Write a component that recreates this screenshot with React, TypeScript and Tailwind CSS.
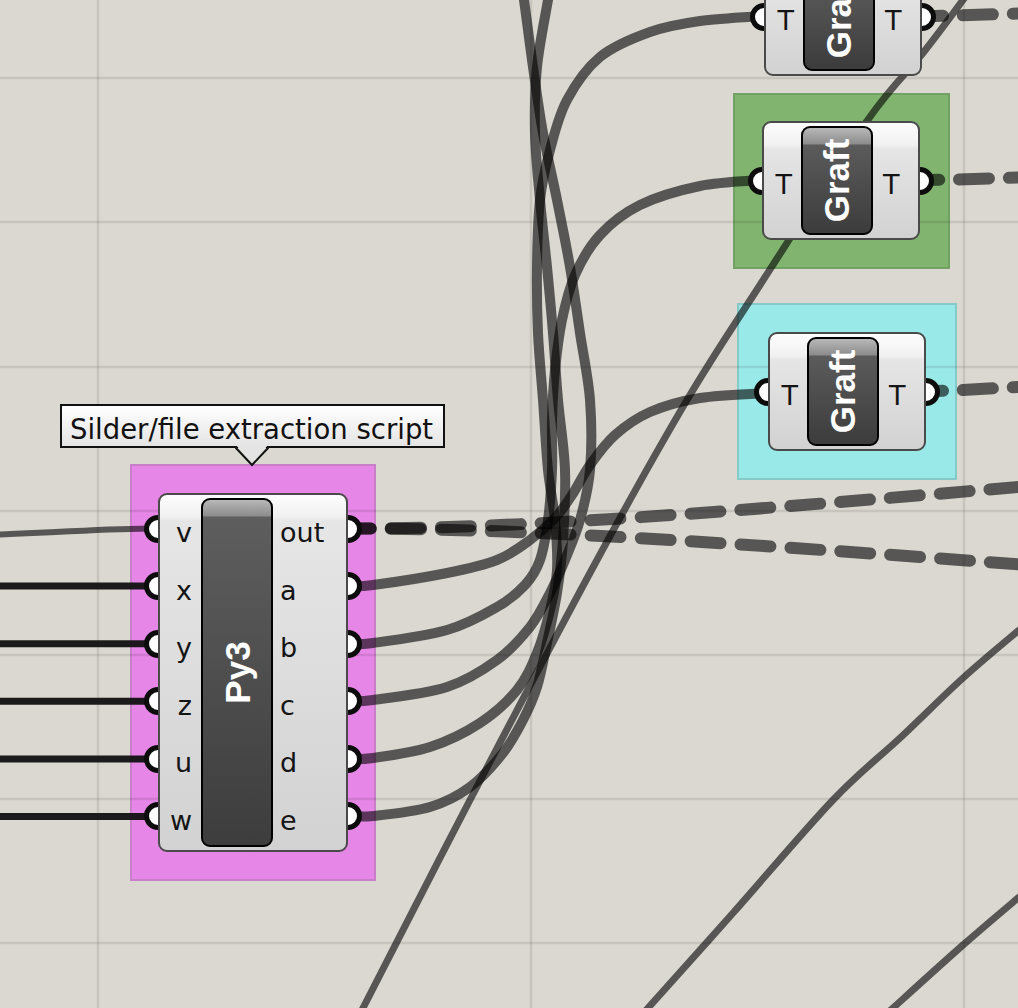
import React from "react";

type P = [number, number];

function smooth(pts: P[]): string {
  let d = `M ${pts[0][0]} ${pts[0][1]}`;
  for (let i = 0; i < pts.length - 1; i++) {
    const p0 = pts[i - 1] || pts[i];
    const p1 = pts[i];
    const p2 = pts[i + 1];
    const p3 = pts[i + 2] || p2;
    const c1x = p1[0] + (p2[0] - p0[0]) / 6;
    const c1y = p1[1] + (p2[1] - p0[1]) / 6;
    const c2x = p2[0] - (p3[0] - p1[0]) / 6;
    const c2y = p2[1] - (p3[1] - p1[1]) / 6;
    d += ` C ${c1x.toFixed(1)} ${c1y.toFixed(1)}, ${c2x.toFixed(1)} ${c2y.toFixed(1)}, ${p2[0]} ${p2[1]}`;
  }
  return d;
}

const rowY = [528.5, 586.1, 643.7, 701.3, 758.9, 816.5];

const wireA: P[] = [
  [347, 586], [373, 585], [447, 573], [497, 560], [530, 540], [555, 518], [572, 495],
  [590, 465], [615, 435], [650, 412], [700, 398], [768, 393],
];
const wireB: P[] = [
  [347, 644], [373, 643], [447, 630], [497, 607], [525, 585], [540, 560], [548, 520],
  [552, 470], [552, 420], [555, 370], [562, 320], [575, 275], [600, 235], [640, 205],
  [700, 186], [762, 180],
];
const wireC: P[] = [
  [347, 701], [373, 700], [447, 687], [497, 660], [530, 627], [550, 593], [565, 560],
  [580, 520], [590, 470], [590, 400], [580, 333], [570, 267], [557, 200], [543, 133],
  [533, 67], [524, 0], [518, -40],
];
const wireD: P[] = [
  [347, 759], [373, 758], [430, 747], [480, 723], [517, 690], [537, 653], [550, 610],
  [557, 570], [555, 520], [548, 470], [543, 400], [538, 333], [537, 267], [540, 200],
  [550, 150], [567, 100], [600, 57], [650, 32], [700, 21], [764, 16],
];
const wireE: P[] = [
  [347, 816], [373, 816], [430, 807], [470, 787], [503, 753], [523, 720], [537, 687],
  [547, 643], [557, 593], [563, 540], [565, 470], [558, 400], [553, 333], [547, 267],
  [540, 200], [535, 133], [537, 67], [548, 0], [555, -40],
];
const wireL: P[] = [
  [350, 1030], [363, 1008], [470, 800], [597, 560], [687, 400], [760, 285], [867, 121],
  [923, 53], [963, 0], [975, -18],
];
const wireR1: P[] = [
  [630, 1030], [648, 1008], [733, 913], [833, 800], [900, 738], [963, 678], [1018, 631], [1040, 614],
];
const wireR2: P[] = [
  [875, 1025], [893, 1008], [963, 945], [1018, 898], [1040, 880],
];

function Grip() {
  return <div className="h-[28px] w-[28px] shrink-0 rounded-full border-[5px] border-[#0c0c0c] bg-white" />;
}

function Label({ children }: { children: React.ReactNode }) {
  return (
    <span className="translate-y-[4px] text-[27px] leading-none text-[#141414]">{children}</span>
  );
}

function BarText({ children }: { children: React.ReactNode }) {
  return (
    <span className="shrink-0 -rotate-90 whitespace-nowrap font-['Liberation_Sans',Arial,sans-serif] text-[35px] font-bold leading-none text-white">
      {children}
    </span>
  );
}

function Graft({ pos }: { pos: string }) {
  return (
    <div className={`absolute h-[119px] w-[158px] ${pos}`}>
      <div className="absolute inset-x-[-14px] inset-y-0 flex items-center justify-between">
        <Grip />
        <Grip />
      </div>
      <div className="relative flex h-full rounded-[9px] border-2 border-[#4a4a4a] bg-[linear-gradient(180deg,#fdfdfd_0px,#f1f1f1_22px,#e5e5e5_26px,#d2d2d2_100%)] py-[3px]">
        <div className="flex w-[37px] items-center justify-end pr-[9px]">
          <Label>T</Label>
        </div>
        <div className="flex w-[72px] items-center justify-center rounded-[9px] border-2 border-black bg-[linear-gradient(180deg,#b8b8b8_0px,#8c8c8c_16px,#5b5b5b_17px,#3c3c3c_100%)]">
          <BarText>Graft</BarText>
        </div>
        <div className="flex flex-1 items-center pl-[10px]">
          <Label>T</Label>
        </div>
      </div>
    </div>
  );
}

export default function App() {
  const inputs = ["v", "x", "y", "z", "u", "w"];
  const outputs = ["out", "a", "b", "c", "d", "e"];
  const gridH = [78, 222, 367, 511, 655, 799, 943];
  const gridV = [98, 531, 964];
  const wire = { fill: "none", stroke: "#000", strokeOpacity: 0.6, strokeLinecap: "round" as const };

  return (
    <div className="relative h-[1008px] w-[1018px] overflow-hidden bg-[#dbd8d1] font-['DejaVu_Sans',sans-serif]">
      {/* groups */}
      <div className="absolute left-[130px] top-[464px] h-[417px] w-[246px] border-2 border-[#c97ec9] bg-[#e686e6]" />
      <div className="absolute left-[733px] top-[93px] h-[176px] w-[217px] border-2 border-[#72a263] bg-[#80b46f]" />
      <div className="absolute left-[737px] top-[303px] h-[177px] w-[220px] border-2 border-[#86c9c9] bg-[#9ae9e9]" />

      {/* grid + wires */}
      <svg className="absolute inset-0" width="1018" height="1008" viewBox="0 0 1018 1008">
        {gridH.map((y) => (
          <line key={`h${y}`} x1="0" x2="1018" y1={y} y2={y} stroke="#000" strokeOpacity="0.09" strokeWidth="2.5" />
        ))}
        {gridV.map((x) => (
          <line key={`v${x}`} y1="0" y2="1008" x1={x} x2={x} stroke="#000" strokeOpacity="0.09" strokeWidth="2.5" />
        ))}

        {/* inputs */}
        <path d="M -20 535 C 60 533, 100 528.5, 158 528.5" {...wire} strokeWidth="6" />
        {rowY.slice(1).map((y) => (
          <line key={`in${y}`} x1="-10" x2="158" y1={y} y2={y} stroke="#111" strokeOpacity="0.95" strokeWidth="7" />
        ))}

        {/* out dashed */}
        <path d="M 347 528.5 C 520 528.5, 700 515, 1120 478" {...wire} strokeWidth="12" strokeDasharray="30 20" strokeDashoffset="6" />
        <path d="M 347 528.5 C 520 528.5, 700 540, 1120 572" {...wire} strokeWidth="12" strokeDasharray="30 20" strokeDashoffset="6" />

        {/* outputs to grafts */}
        <path d={smooth(wireA)} {...wire} strokeWidth="10" />
        <path d={smooth(wireB)} {...wire} strokeWidth="10" />
        <path d={smooth(wireC)} {...wire} strokeWidth="10" />
        <path d={smooth(wireD)} {...wire} strokeWidth="10" />
        <path d={smooth(wireE)} {...wire} strokeWidth="10" />

        {/* long wires */}
        <path d={smooth(wireL)} {...wire} strokeWidth="7" />
        <path d={smooth(wireR1)} {...wire} strokeWidth="7" />
        <path d={smooth(wireR2)} {...wire} strokeWidth="7" />

        {/* graft outputs */}
        <path d="M 924 16 C 960 16, 990 14, 1040 13" {...wire} strokeWidth="12" strokeDasharray="30 20" strokeDashoffset="11" />
        <path d="M 920 180 C 960 180, 990 178, 1040 177" {...wire} strokeWidth="12" strokeDasharray="30 20" strokeDashoffset="11" />
        <path d="M 926 391 C 960 391, 990 388, 1040 386" {...wire} strokeWidth="12" strokeDasharray="30 20" strokeDashoffset="13" />
      </svg>

      {/* Py3 component */}
      <div className="absolute left-[158px] top-[493px] h-[359px] w-[190px]">
        <div className="absolute inset-x-[-14px] top-[5px] bottom-[5px] flex flex-col justify-center">
          {inputs.map((k) => (
            <div key={k} className="flex h-[57.6px] items-center justify-between">
              <Grip />
              <Grip />
            </div>
          ))}
        </div>
        <div className="relative flex h-full rounded-[9px] border-2 border-[#4a4a4a] bg-[linear-gradient(180deg,#fdfdfd_0px,#f1f1f1_22px,#e6e6e6_26px,#d2d2d2_100%)] py-[3px]">
          <div className="flex w-[41px] flex-col justify-center">
            {inputs.map((k) => (
              <div key={k} className="flex h-[57.6px] items-center justify-end pr-[9px]">
                <Label>{k}</Label>
              </div>
            ))}
          </div>
          <div className="flex w-[72px] items-center justify-center rounded-[9px] border-2 border-black bg-[linear-gradient(180deg,#b8b8b8_0px,#8c8c8c_16px,#5e5e5e_17px,#3d3d3d_100%)]">
            <BarText>Py3</BarText>
          </div>
          <div className="flex flex-1 flex-col justify-center">
            {outputs.map((k) => (
              <div key={k} className="flex h-[57.6px] items-center pl-[7px]">
                <Label>{k}</Label>
              </div>
            ))}
          </div>
        </div>
      </div>

      {/* Graft components */}
      <Graft pos="left-[764px] top-[-43px]" />
      <Graft pos="left-[762px] top-[121px]" />
      <Graft pos="left-[768px] top-[332px]" />

      {/* tooltip */}
      <div className="absolute left-[60px] top-[404px] h-[44px] w-[385px] border-2 border-[#111] bg-[linear-gradient(180deg,#ffffff,#e4e4e4)] pl-[8px] pt-[10px]">
        <div className="whitespace-nowrap text-[27.5px] leading-none text-[#111]">Silder/file extraction script</div>
      </div>
      <svg className="absolute left-[235px] top-[445px]" width="34" height="22" viewBox="0 0 34 22">
        <polygon points="1,0 17,19 33,0" fill="#e4e4e4" />
        <polyline points="0,2 17,20 34,2" fill="none" stroke="#111" strokeWidth="2" />
      </svg>
    </div>
  );
}
